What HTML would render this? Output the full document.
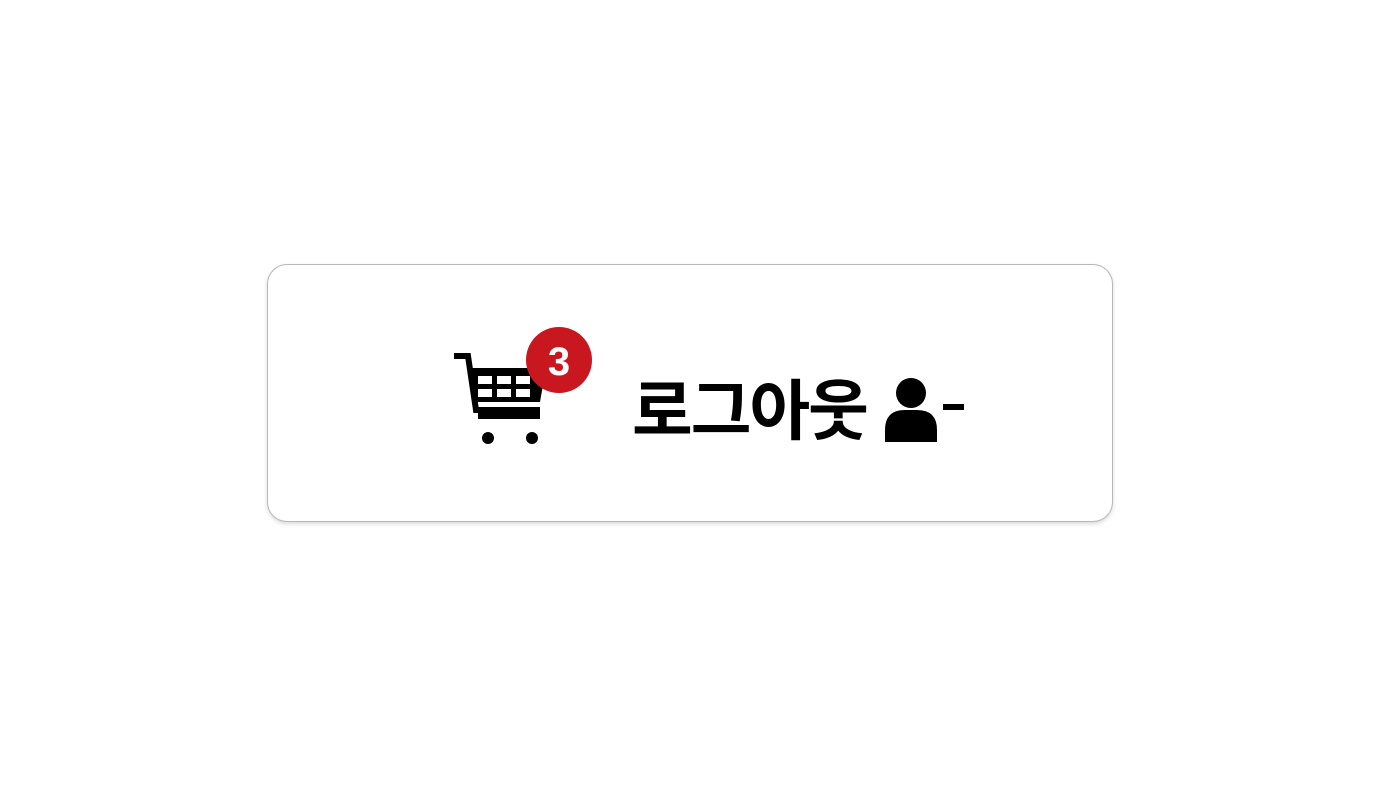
<!DOCTYPE html>
<html><head><meta charset="utf-8"><style>
body{margin:0;width:1380px;height:793px;background:#fff;position:relative;overflow:hidden}
.box{position:absolute;left:267px;top:264px;width:844px;height:256px;border:1px solid #b8b8b8;border-radius:20px;box-shadow:0 2px 4px rgba(0,0,0,.15);background:#fff}
.t{position:absolute;left:632px;top:371px;font:bold 66px "Liberation Sans","Noto Sans CJK KR",sans-serif;color:#000;line-height:80px;letter-spacing:-2px;white-space:nowrap}
</style></head><body>
<div class="box"></div>
<svg style="position:absolute;left:450px;top:320px" width="150" height="130" viewBox="450 320 150 130">
<path d="M454 356 H468 L476 410 H540" stroke="#000" stroke-width="6" fill="none"/>
<path d="M470 368 H546 L540 402 H475 Z" fill="#000"/>
<g fill="#fff"><rect x="478" y="376" width="14" height="8"/><rect x="497" y="376" width="14" height="8"/><rect x="516" y="376" width="14" height="8"/><rect x="478" y="389" width="14" height="8"/><rect x="497" y="389" width="14" height="8"/><rect x="516" y="389" width="14" height="8"/></g>
<rect x="478" y="413" width="62" height="6" fill="#000"/>
<circle cx="488" cy="438" r="6" fill="#000"/><circle cx="532" cy="438" r="6" fill="#000"/>
<circle cx="559" cy="360" r="33" fill="#c8171e"/>
<text x="559" y="375" text-anchor="middle" font-family="Liberation Sans,sans-serif" font-weight="bold" font-size="40" fill="#fff">3</text>
</svg>
<div class="t">로그아웃</div>
<svg style="position:absolute;left:880px;top:374px" width="90" height="72" viewBox="880 374 90 72">
<circle cx="911" cy="393" r="15" fill="#000"/>
<path d="M885 442 V430 Q885 410 905 410 H917 Q937 410 937 430 V442 Z" fill="#000"/>
<rect x="943" y="404" width="21" height="6" fill="#000"/>
</svg>
</body></html>
